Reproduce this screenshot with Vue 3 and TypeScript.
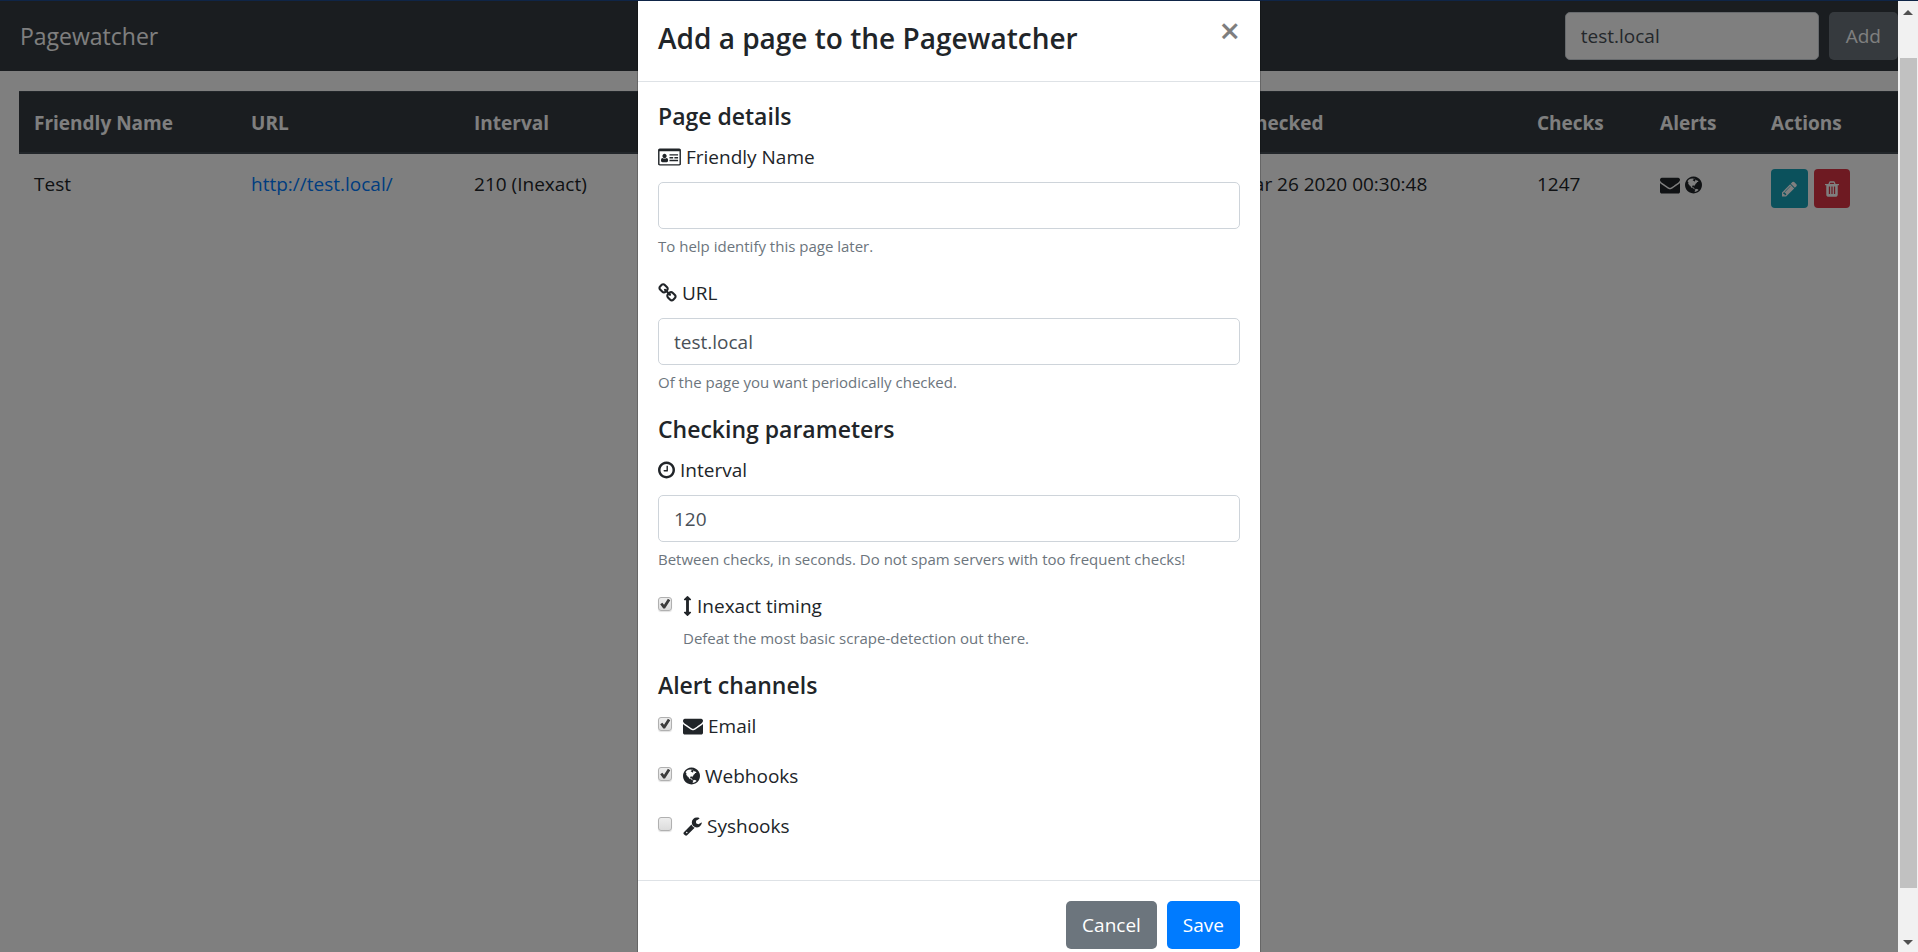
<script setup lang="ts">
import { ref } from 'vue'

interface Icon {
  box: string
  width: number
  path: string
}

const icons: Record<string, Icon> = {
  card: {
    box: '0 0 2048 1792',
    width: 23,
    path: 'M150 128h1748q62 0 106 44t44 106v1236q0 62-44 106t-106 44h-1748q-62 0-106-44t-44-106v-1236q0-62 44-106t106-44zm-22 256v1120q0 32 32 32h1728q32 0 32-32v-1120zM896 1205q0 75-38 116t-94 41h-372q-56 0-94-41t-38-116q0-90 30-152t100-74q74 70 188 70t188-70q70 12 100 74t30 152zm-126-400q0 82-56 138t-136 56-136-56-56-138 56-138 136-56 136 56 56 138zM1024 1152h768v128h-768zM1024 896h330v128h-330zM1462 896h330v128h-330zM1024 640h768v128h-768z',
  },
  link: {
    box: '64 0 1664 1792',
    width: 19,
    path: 'M1520 1216q0-40-28-68l-208-208q-28-28-68-28-42 0-72 32 3 3 19 18.5t21.5 21.5 15 19 13 25.5 3.5 27.5q0 40-28 68t-68 28q-15 0-27.5-3.5t-25.5-13-19-15-21.5-21.5-18.5-19q-33 31-33 73 0 40 28 68l206 207q27 27 68 27 40 0 68-26l147-146q28-28 28-67zm-703-705q0-40-28-68l-206-207q-28-28-68-28-39 0-68 27l-147 146q-28 28-28 67 0 40 28 68l208 208q27 27 68 27 42 0 72-31-3-3-19-18.5t-21.5-21.5-15-19-13-25.5-3.5-27.5q0-40 28-68t68-28q15 0 27.5 3.5t25.5 13 19 15 21.5 21.5 18.5 19q33-31 33-73zm895 705q0 120-85 203l-147 146q-83 83-203 83-121 0-204-85l-206-207q-83-83-83-203 0-123 88-209l-88-88q-86 88-208 88-120 0-204-84l-208-208q-84-84-84-204t85-203l147-146q83-83 203-83 121 0 204 85l206 207q83 83 83 203 0 123-88 209l88 88q86-88 208-88 120 0 204 84l208 208q84 84 84 204z',
  },
  clock: {
    box: '128 0 1536 1792',
    width: 17,
    path: 'M1024 544v448q0 14-9 23t-23 9h-320q-14 0-23-9t-9-23v-64q0-14 9-23t23-9h224v-352q0-14 9-23t23-9h64q14 0 23 9t9 23zm416 352q0-148-73-273t-198-198-273-73-273 73-198 198-73 273 73 273 198 198 273 73 273-73 198-198 73-273zm224 0q0 209-103 385.5t-279.5 279.5-385.5 103-385.5-103-279.5-279.5-103-385.5 103-385.5 279.5-279.5 385.5-103 385.5 103 279.5 279.5 103 385.5z',
  },
  arrows: {
    box: '544 0 704 1792',
    width: 9,
    path: 'M1216 320q0 26-19 45t-45 19h-128v1024h128q26 0 45 19t19 45-19 45l-256 256q-19 19-45 19t-45-19l-256-256q-19-19-19-45t19-45 45-19h128v-1024h-128q-26 0-45-19t-19-45 19-45l256-256q19-19 45-19t45 19l256 256q19 19 19 45z',
  },
  envelope: {
    box: '0 0 1792 1792',
    width: 20,
    path: 'M1792 710v794q0 66-47 113t-113 47h-1472q-66 0-113-47t-47-113v-794q44 49 101 87 362 246 497 345 57 42 92.5 65.5t94.5 48 110 24.5h2q51 0 110-24.5t94.5-48 92.5-65.5q170-123 498-345 57-39 100-87zm0-294q0 79-49 151t-122 123q-376 261-468 325-10 7-42.5 31t-54 38.5-52 32.5-57.5 27-50 9h-2q-23 0-50-9t-57.5-27-52-32.5-54-38.5-42.5-31q-91-64-262-182.5t-205-142.5q-62-42-117-115.5t-55-136.5q0-78 41.5-130t118.5-52h1472q65 0 112.5 47t47.5 113z',
  },
  globe: {
    box: '128 0 1536 1792',
    width: 17,
    path: 'M896 128q209 0 385.5 103t279.5 279.5 103 385.5-103 385.5-279.5 279.5-385.5 103-385.5-103-279.5-279.5-103-385.5 103-385.5 279.5-279.5 385.5-103zm274 521q-2 1-9.5 9.5t-13.5 9.5q2 0 4.5-5t5-11 3.5-7q6-7 22-15 14-6 52-12 34-8 51 11-2-2 9.5-13t14.5-12q3-2 15-4.5t15-7.5l2-22q-12 1-17.5-7t-6.5-21q0 2-6 8 0-7-4.5-8t-11.5 1-9 1q-10-3-15-7.5t-8-16.5-4-15q-2-5-9.5-11t-9.5-10q-1-2-2.5-5.5t-3-6.5-4-5.5-5.5-2.5-7 5-7.5 10-4.5 5q-3-2-6-1.5t-4.5 1-4.5 3-5 3.5q-3 2-8.5 3t-8.5 2q15-5-1-11-10-4-16-3 9-4 7.5-12t-8.5-14h5q-1-4-8.5-8.5t-17.5-8.5-13-6q-8-5-34-9.5t-33-.5q-5 6-4.5 10.5t4 14 3.5 12.5q1 6-5.5 13t-6.5 12q0 7 14 15.5t10 21.5q-3 8-16 16t-16 12q-5 8-1.5 18.5t10.5 16.5q2 2 1.5 4t-3.5 4.5-5.5 4-6.5 3.5l-3 2q-11 5-20.5-6t-13.5-26q-7-25-16-30-23-8-29 1-5-13-41-26-25-9-58-4 6-1 0-15-7-15-19-12 3-6 4-17.5t1-13.5q3-13 12-23 1-1 7-8.5t9.5-13.5.5-6q35 4 50-11 5-5 11.5-17t10.5-17q9-6 14-5.5t14.5 5.5 14.5 5q14 1 15.5-11t-7.5-20q12 1 3-17-4-7-8-9-12-4-27 5-8 4 2 8-1-1-9.5 10.5t-16.5 17.5-16-5q-1-1-5.5-13.5t-9.5-13.5q-8 0-16 15 3-8-11-15t-24-8q19-12-8-27-7-4-20.5-5t-19.5 4q-5 7-5.5 11.5t5 8 10.5 5.5 11.5 4 8.5 3q14 10 8 14-2 1-8.5 3.5t-11.5 4.5-6 4q-3 4 0 14t-2 14q-5-5-9-17.5t-7-16.5q7 9-25 6l-10-1q-4 0-16 2t-20.5 1-13.5-8q-4-8 0-20 1-4 4-2-4-3-11-9.5t-10-8.5q-46 15-94 41 6 1 12-1 5-2 13-6.5t10-5.5q34-14 42-7l5-5q14 16 20 25-7-4-30-1-20 6-22 12 7 12 5 18-4-3-11.5-10t-14.5-11-15-5q-16 0-22 1-146 80-235 222 7 7 12 8 4 1 5 9t2.5 11 11.5-3q9 8 3 19 1-1 44 27 19 17 21 21 3 11-10 18-1-2-9-9t-9-4q-3 5 .5 18.5t10.5 12.5q-7 0-9.5 16t-2.5 35.5-1 23.5l2 1q-3 12 5.5 34.5t21.5 19.5q-13 3 20 43 6 8 8 9 3 2 12 7.5t15 10 10 10.5q4 5 10 22.5t14 23.5q-2 6 9.5 20t10.5 23q-1 0-2.5 1t-2.5 1q3 7 15.5 14t15.5 13q1 3 2 10t3 11 8 2q2-20-24-62-15-25-17-29-3-5-5.5-15.5t-4.5-14.5q2 0 6 1.5t8.5 3.5 7.5 4 2 3q-3 7 2 17.5t12 18.5 17 19 12 13q6 6 14 19.5t0 13.5q9 0 20 10.5t17 19.5q5 8 8 26t5 24q2 7 8.5 13.5t12.5 9.5l16 8 13 7q5 2 18.5 10.5t21.5 11.5q10 4 16 4t14.5-2.5 13.5-3.5q15-2 29 15t21 21q36 19 55 11-2 1 .5 7.5t8 15.5 9 14.5 5.5 8.5q5 6 18 15t18 15q6-4 7-9-3 8 7 20t18 10q14-3 14-32-31 15-49-18 0-1-2.5-5.5t-4-8.5-2.5-8.5 0-7.5 5-3q9 0 10-3.5t-2-12.5-4-13q-1-8-11-20t-12-15q-5 9-16 8t-16-9q0 1-1.5 5.5t-1.5 6.5q-13 0-15-1 1-3 2.5-17.5t3.5-22.5q1-4 5.5-12t7.5-14.5 4-12.5-4.5-9.5-17.5-2.5q-19 1-26 20-1 3-3 10.5t-5 11.5-9 7q-7 3-24 2t-24-5q-13-8-22.5-29t-9.5-37q0-10 2.5-26.5t3-25-5.5-24.5q3-2 9-9.5t10-10.5q2-1 4.5-1.5t4.5 0 4-1.5 3-6q-1-1-4-3-3-3-4-3 7 3 28.5-1.5t27.5 1.5q15 11 22-2 0-1-2.5-9.5t-.5-13.5q5 27 29 9 3 3 15.5 5t17.5 5q3 2 7 5.5t5.5 4.5 5-.5 8.5-6.5q10 14 12 24 11 40 19 44 7 3 11 2t4.5-9.5 0-14-1.5-12.5l-1-8v-18l-1-8q-15-3-18.5-12t1.5-18.5 15-18.5q1-1 8-3.5t15.5-6.5 12.5-8q21-19 15-35 7 0 11-9-1 0-5-3t-7.5-5-4.5-2q9-5 2-16 5-3 7.5-11t7.5-10q9 12 21 2 8-8 1-16 5-7 20.5-10.5t18.5-9.5q7 2 8-2t1-12 3-12q4-5 15-9t13-5l17-11q3-4 0-4 18 2 31-11 10-11-6-20 3-6-3-9.5t-15-5.5q3-1 11.5-.5t10.5-1.5q15-10-7-16-17-5-43 12zm-163 877q206-36 351-189-3-3-12.5-4.5t-12.5-3.5q-18-7-24-8 1-7-2.5-13t-8-9-12.5-8-11-7q-2-2-7-6t-7-5.5-7.5-4.5-8.5-2-10 1l-3 1q-3 1-5.5 2.5t-5.5 3-4 3 0 2.5q-21-17-36-22-5-1-11-5.5t-10.5-7-10-1.5-11.5 7q-5 5-6 15t-2 13q-7-5 0-17.5t2-18.5q-3-6-10.5-4.5t-12 4.5-11.5 8.5-9 6.5-8.5 5.5-8.5 7.5q-3 4-6 12t-5 11q-2-4-11.5-6.5t-9.5-5.5q2 10 4 35t5 38q7 31-12 48-27 25-29 40-4 22 12 26 0 7-8 20.5t-7 21.5q0 6 2 16z',
  },
  wrench: {
    box: '64 0 1664 1792',
    width: 19,
    path: 'M448 1472q0-26-19-45t-45-19-45 19-19 45 19 45 45 19 45-19 19-45zm644-420l-682 682q-37 37-90 37-52 0-91-37l-106-108q-38-36-38-90 0-53 38-91l681-681q39 98 114.5 173.5t173.5 114.5zm634-435q0 39-23 106-47 134-164.5 217.5t-258.5 83.5q-185 0-316.5-131.5t-131.5-316.5 131.5-316.5 316.5-131.5q58 0 121.5 16.5t107.5 46.5q16 11 16 28t-16 28l-293 169v224l193 107q5-3 79-48.5t135.5-81 70.5-35.5q15 0 23.5 10t8.5 25z',
  },
  pencil: {
    box: '128 0 1536 1792',
    width: 15,
    path: 'M491 1536l91-91-235-235-91 91v107h128v128h107zm523-928q0-22-22-22-10 0-17 7l-542 542q-7 7-7 17 0 22 22 22 10 0 17-7l542-542q7-7 7-17zm-54-192l416 416-832 832h-416v-416zm683 96q0 53-37 90l-166 166-416-416 166-165q36-38 90-38 53 0 91 38l235 234q37 39 37 91z',
  },
  trash: {
    box: '192 0 1408 1792',
    width: 14,
    path: 'M704 1376v-704q0-14-9-23t-23-9h-64q-14 0-23 9t-9 23v704q0 14 9 23t23 9h64q14 0 23-9t9-23zm256 0v-704q0-14-9-23t-23-9h-64q-14 0-23 9t-9 23v704q0 14 9 23t23 9h64q14 0 23-9t9-23zm256 0v-704q0-14-9-23t-23-9h-64q-14 0-23 9t-9 23v704q0 14 9 23t23 9h64q14 0 23-9t9-23zm-544-992h448l-48-117q-7-9-17-11h-317q-10 2-17 11zm928 32v64q0 14-9 23t-23 9h-96v948q0 83-47 143.5t-113 60.5h-832q-66 0-113-58.5t-47-141.5v-952h-96q-14 0-23-9t-9-23v-64q0-14 9-23t23-9h309l70-167q15-37 54-63t79-26h320q40 0 79 26t54 63l70 167h309q14 0 23 9t9 23z',
  },
}

const quickUrl = ref('test.local')
const name = ref('')
const url = ref('test.local')
const interval = ref('120')
const inexact = ref(true)

const pages = ref([
  {
    name: 'Test',
    url: 'http://test.local/',
    interval: '210 (Inexact)',
    checked: 'Thu Mar 26 2020 00:30:48',
    checks: 1247,
    alerts: ['envelope', 'globe'],
  },
])

const channels = ref([
  { id: 'email', label: 'Email', icon: 'envelope', on: true },
  { id: 'webhooks', label: 'Webhooks', icon: 'globe', on: true },
  { id: 'syshooks', label: 'Syshooks', icon: 'wrench', on: false },
])
</script>

<template>
  <div class="app">
    <div class="strip"></div>
    <header class="navbar">
      <a class="brand" href="#">Pagewatcher</a>
      <form class="quick" @submit.prevent>
        <input v-model="quickUrl" class="control" type="text" aria-label="Page URL" />
        <button class="btn grey" type="submit">Add</button>
      </form>
    </header>

    <main class="content">
      <table class="pages">
        <colgroup>
          <col class="c-name" />
          <col class="c-url" />
          <col class="c-interval" />
          <col class="c-checked" />
          <col class="c-checks" />
          <col class="c-alerts" />
          <col class="c-actions" />
        </colgroup>
        <thead>
          <tr>
            <th scope="col">Friendly Name</th>
            <th scope="col">URL</th>
            <th scope="col">Interval</th>
            <th scope="col">Last Checked</th>
            <th scope="col">Checks</th>
            <th scope="col">Alerts</th>
            <th scope="col">Actions</th>
          </tr>
        </thead>
        <tbody>
          <tr v-for="page in pages" :key="page.url">
            <td>{{ page.name }}</td>
            <td><a class="link" :href="page.url">{{ page.url }}</a></td>
            <td>{{ page.interval }}</td>
            <td>{{ page.checked }}</td>
            <td>{{ page.checks }}</td>
            <td>
              <div class="alerts">
                <svg v-for="a in page.alerts" :key="a" class="icon" :width="icons[a].width" height="20" :viewBox="icons[a].box" aria-hidden="true">
                  <path :d="icons[a].path" />
                </svg>
              </div>
            </td>
            <td>
              <div class="actions">
                <button class="btn small teal" type="button" aria-label="Edit">
                  <svg class="icon" :width="icons.pencil.width" height="18" :viewBox="icons.pencil.box" aria-hidden="true"><path :d="icons.pencil.path" /></svg>
                </button>
                <button class="btn small red" type="button" aria-label="Delete">
                  <svg class="icon" :width="icons.trash.width" height="18" :viewBox="icons.trash.box" aria-hidden="true"><path :d="icons.trash.path" /></svg>
                </button>
              </div>
            </td>
          </tr>
        </tbody>
      </table>
    </main>

    <div class="overlay">
      <div class="scroller">
        <form class="dialog" role="dialog" aria-labelledby="dialog-title" @submit.prevent>
          <div class="dialog-head">
            <h4 id="dialog-title">Add a page to the Pagewatcher</h4>
            <button class="close" type="button" aria-label="Close">×</button>
          </div>

          <div class="dialog-body">
            <h5>Page details</h5>
            <div class="group">
              <label for="name">
                <svg class="icon" :width="icons.card.width" height="20" :viewBox="icons.card.box" aria-hidden="true"><path fill-rule="evenodd" :d="icons.card.path" /></svg>
                Friendly Name
              </label>
              <input id="name" v-model="name" class="control" type="text" />
              <small>To help identify this page later.</small>
            </div>
            <div class="group">
              <label for="url">
                <svg class="icon" :width="icons.link.width" height="20" :viewBox="icons.link.box" aria-hidden="true"><path :d="icons.link.path" /></svg>
                URL
              </label>
              <input id="url" v-model="url" class="control" type="text" />
              <small>Of the page you want periodically checked.</small>
            </div>

            <h5>Checking parameters</h5>
            <div class="group">
              <label for="interval">
                <svg class="icon" :width="icons.clock.width" height="20" :viewBox="icons.clock.box" aria-hidden="true"><path :d="icons.clock.path" /></svg>
                Interval
              </label>
              <input id="interval" v-model="interval" class="control" type="text" inputmode="numeric" />
              <small>Between checks, in seconds. Do not spam servers with too frequent checks!</small>
            </div>
            <div class="check">
              <input id="inexact" v-model="inexact" type="checkbox" />
              <div>
                <label for="inexact">
                  <svg class="icon" :width="icons.arrows.width" height="20" :viewBox="icons.arrows.box" aria-hidden="true"><path :d="icons.arrows.path" /></svg>
                  Inexact timing
                </label>
                <small>Defeat the most basic scrape-detection out there.</small>
              </div>
            </div>

            <h5>Alert channels</h5>
            <div v-for="c in channels" :key="c.id" class="check">
              <input :id="c.id" v-model="c.on" type="checkbox" />
              <label :for="c.id">
                <svg class="icon" :width="icons[c.icon].width" height="20" :viewBox="icons[c.icon].box" aria-hidden="true"><path :d="icons[c.icon].path" /></svg>
                {{ c.label }}
              </label>
            </div>
          </div>

          <div class="dialog-foot">
            <button class="btn grey" type="button">Cancel</button>
            <button class="btn blue" type="submit">Save</button>
          </div>
        </form>
      </div>

      <div class="scrollbar" aria-hidden="true">
        <svg class="arrow" viewBox="0 0 20 20"><path d="M5 14l5-5 5 5z" /></svg>
        <div class="gap-top"></div>
        <div class="thumb"></div>
        <div class="gap-bottom"></div>
        <svg class="arrow" viewBox="0 0 20 20"><path d="M5 8l5 5 5-5z" /></svg>
      </div>
    </div>
  </div>
</template>

<style>
body {
  margin: 0;
  background: #fff;
}
</style>

<style scoped>
.app,
.app * {
  box-sizing: border-box;
}

.app {
  height: 100vh;
  overflow: hidden;
  color: #212529;
  font: 19px/30px "Segoe UI", "Open Sans", "Noto Sans", sans-serif;
}

.strip {
  height: 1px;
  background: #0f2547;
}

.navbar {
  display: flex;
  align-items: center;
  justify-content: space-between;
  padding: 11px 20px;
  background: #343a40;
}

.brand {
  color: #fff;
  font-size: 23px;
  text-decoration: none;
}

.quick {
  display: flex;
  gap: 10px;
}

.quick .control {
  width: 254px;
  height: 48px;
}

.quick .btn {
  padding: 0 17px;
}

.control {
  display: block;
  width: 100%;
  height: 47px;
  padding: 0 15px;
  border: 1px solid #ced4da;
  border-radius: 5px;
  background: #fff;
  color: #495057;
  font: inherit;
}

.btn {
  height: 48px;
  padding: 0 16px;
  border: 0;
  border-radius: 5px;
  color: #fff;
  font: inherit;
}

.grey {
  background: #6c757d;
}

.blue {
  background: #007bff;
}

.teal {
  background: #17a2b8;
}

.red {
  background: #dc3545;
}

.small {
  display: flex;
  align-items: center;
  height: 39px;
  padding: 0 11px;
  border-radius: 4px;
}

.icon {
  flex: none;
  fill: currentColor;
}

.content {
  padding: 20px 20px 0 19px;
}

.pages {
  width: 100%;
  border-spacing: 0;
  table-layout: fixed;
}

.c-name { width: 11.55%; }
.c-url { width: 11.87%; }
.c-interval { width: 38.53%; }
.c-checked { width: 18.04%; }
.c-checks { width: 6.55%; }
.c-alerts { width: 5.91%; }
.c-actions { width: 7.55%; }

th,
td {
  padding: 15px;
  text-align: left;
  vertical-align: top;
}

th {
  padding: 16px 15px 14px;
  border-top: 1px solid #454d55;
  border-bottom: 2px solid #454d55;
  background: #343a40;
  color: #fff;
  font-weight: 700;
}

.link {
  color: #007bff;
  text-decoration: none;
}

.alerts {
  display: flex;
  align-items: center;
  gap: 5px;
  height: 32px;
}

.actions {
  display: flex;
  gap: 6px;
}

.overlay {
  position: fixed;
  inset: 1px 0 0;
  display: flex;
  overflow: hidden;
  background: rgba(0, 0, 0, 0.5);
}

.scroller {
  flex: 1;
  overflow: hidden;
}

.dialog {
  max-width: 624px;
  min-height: 100%;
  margin: 0 auto;
  border: solid rgba(0, 0, 0, 0.2);
  border-width: 0 1px;
  background: #fff;
  background-clip: padding-box;
}

.dialog-head {
  display: flex;
  align-items: flex-start;
  justify-content: space-between;
  padding: 15px 20px 20px;
  border-bottom: 1px solid #dee2e6;
}

h4,
h5 {
  margin: 0;
  font-weight: 600;
}

h4 {
  font-size: 28px;
  line-height: 45px;
}

h5 {
  margin-bottom: 10px;
  font-size: 23px;
  line-height: 31px;
}

.close {
  padding: 0;
  border: 0;
  background: none;
  color: #000;
  font: 600 36px/30px "Segoe UI", "Open Sans", sans-serif;
  opacity: 0.5;
}

.dialog-body {
  padding: 19px 20px;
}

.group,
.check {
  margin-bottom: 20px;
}

label {
  display: flex;
  align-items: center;
  gap: 5px;
}

.group label {
  margin-bottom: 10px;
}

small {
  display: block;
  margin-top: 5px;
  color: #6c757d;
  font-size: 15px;
  line-height: 24px;
}

.check {
  display: flex;
  gap: 11px;
}

.check > input {
  appearance: none;
  width: 14px;
  height: 14px;
  margin: 6px 0 0;
  border: 1px solid #b0b0b0;
  border-radius: 3px;
  background: linear-gradient(#eee, #dcdcdc);
  box-shadow: 0 1px 1px rgba(0, 0, 0, 0.12);
}

.check > input:checked::before {
  content: "";
  display: block;
  height: 12px;
  background: #3c3c3c;
  clip-path: polygon(10% 52%, 28% 40%, 42% 56%, 74% 6%, 94% 18%, 50% 88%, 36% 88%);
}

.dialog-foot {
  display: flex;
  justify-content: flex-end;
  gap: 10px;
  padding: 20px;
  border-top: 1px solid #dee2e6;
}

.scrollbar {
  display: flex;
  flex-direction: column;
  width: 20px;
  background: #f1f1f1;
}

.arrow {
  flex: none;
  width: 20px;
  height: 20px;
  fill: #505050;
}

.gap-top {
  flex: 37;
}

.thumb {
  flex: 830;
  margin: 0 1px 0 2px;
  background: #c1c1c1;
}

.gap-bottom {
  flex: 44;
}
</style>
